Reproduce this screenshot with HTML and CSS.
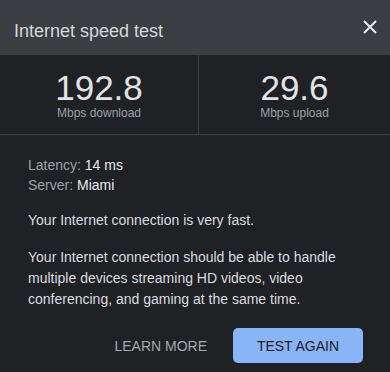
FILE: index.html
```html
<!DOCTYPE html>
<html lang="en">
<head>
    <meta charset="UTF-8">
    <meta name="viewport" content="width=device-width, initial-scale=1.0">
    <title>Internet speed test</title>
    <link rel="stylesheet" href="styles.css">
</head>
<body>

    <div class="dialog">
        <!-- Header -->
        <header class="dialog-header">
            <h1>Internet speed test</h1>
            <button class="close" aria-label="Close">
                <svg width="14" height="14" viewBox="0 0 14 14">
                    <path d="M1 1 L13 13 M13 1 L1 13" stroke="#e8eaed" stroke-width="2" fill="none"/>
                </svg>
            </button>
        </header>

        <!-- Results -->
        <section class="stats">
            <div class="stat">
                <div class="stat-value">192.8</div>
                <div class="stat-label">Mbps download</div>
            </div>
            <div class="stat">
                <div class="stat-value">29.6</div>
                <div class="stat-label">Mbps upload</div>
            </div>
        </section>

        <!-- Details -->
        <section class="details">
            <div class="meta">
                <div><span class="meta-label">Latency:</span> 14 ms</div>
                <div><span class="meta-label">Server:</span> Miami</div>
            </div>
            <p>Your Internet connection is very fast.</p>
            <p>Your Internet connection should be able to handle multiple devices streaming HD videos, video conferencing, and gaming at the same time.</p>

            <div class="actions">
                <button class="btn btn-text">LEARN MORE</button>
                <button class="btn btn-primary">TEST AGAIN</button>
            </div>
        </section>
    </div>

</body>
</html>
```

FILE: styles.css
```css
/* Global Styles */
body {
    font-family: "Liberation Sans", Arial, sans-serif;
    margin: 0;
    padding: 0;
    background-color: #202124;
}

.dialog {
    width: 390px;
    height: 372px;
    background-color: #202124;
    color: #e8eaed;
}

.dialog-header {
    height: 55px;
    box-sizing: border-box;
    background-color: #3b3e42;
    display: flex;
    justify-content: space-between;
    padding: 0 12px 0 14px;
}

.dialog-header h1 {
    margin: 0;
    padding-top: 21px;
    font-size: 18px;
    font-weight: normal;
    line-height: 20px;
    color: #d6d7d9;
}

.close {
    background: none;
    border: none;
    padding: 0;
    margin-top: 20px;
    width: 16px;
    height: 14px;
    cursor: pointer;
}

.stats {
    display: grid;
    grid-template-columns: 199px 1fr;
    border-bottom: 1px solid #3c4043;
    height: 80px;
    box-sizing: border-box;
}

.stat {
    text-align: center;
    padding-top: 13px;
}

.stat:first-child {
    border-right: 1px solid #3c4043;
}

.stat-value {
    font-size: 35px;
    line-height: 39px;
    color: #e2e3e5;
}

.stat-label {
    font-size: 12px;
    line-height: 13px;
    color: #9aa0a6;
}

.details {
    padding: 20px 27px 0 28px;
    font-size: 14px;
}

.meta {
    line-height: 20px;
    color: #e8eaed;
}

.meta-label {
    color: #9aa0a6;
}

.details p {
    margin: 15px 0 0;
    line-height: 21px;
    color: #dadce0;
}

.details p + p {
    margin-top: 16px;
}

.actions {
    display: flex;
    justify-content: flex-end;
    align-items: center;
    gap: 10px;
    margin-top: 18px;
}

.btn {
    font-family: inherit;
    font-size: 14px;
    height: 35px;
    border: none;
    border-radius: 5px;
    cursor: pointer;
}

.btn-text {
    background: none;
    color: #a3a7ab;
    padding: 0 16px;
}

.btn-primary {
    width: 130px;
    background-color: #8ab4f8;
    color: #202124;
}
```
